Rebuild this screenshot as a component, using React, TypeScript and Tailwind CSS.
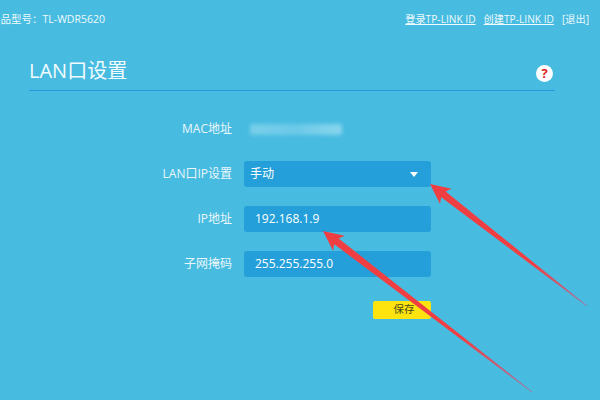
const font = "[font-family:'Open_Sans','Noto_Sans_CJK_SC',sans-serif]";

function Field({ label, children }: { label: string; children: React.ReactNode }) {
  return (
    <div className="flex items-center h-[26px]">
      <div className="w-[203px] text-right text-[12px] text-[#eaf7fc] whitespace-nowrap">{label}</div>
      <div className="ml-[12px]">{children}</div>
    </div>
  );
}

function Box({ children }: { children: React.ReactNode }) {
  return (
    <div className="w-[187px] h-[26px] rounded-[3px] bg-[#249fd9] flex items-center justify-between text-white text-[12px] pl-[11px] pr-[13px]">
      {children}
    </div>
  );
}

function Arrow({ id, tip, tail }: { id: string; tip: [number, number]; tail: [number, number] }) {
  const [x, y] = tip;
  const [tx, ty] = tail;
  const len = Math.hypot(tx - x, ty - y);
  const ux = (tx - x) / len;
  const uy = (ty - y) / len;
  const nx = -uy;
  const ny = ux;
  const p = (d: number, w: number) => `${x + ux * d + nx * w},${y + uy * d + ny * w}`;
  const pts = [p(0, 0), p(20, 9.5), p(17, 3.6), p(len, 0.4), p(len, -0.4), p(17, -3.6), p(20, -9.5)].join(" ");
  return (
    <>
      <defs>
        <linearGradient id={id} gradientUnits="userSpaceOnUse" x1={x} y1={y} x2={tx} y2={ty}>
          <stop offset="0.65" stopColor="#f03f42" />
          <stop offset="1" stopColor="#a8729c" />
        </linearGradient>
      </defs>
      <polygon points={pts} fill={`url(#${id})`} />
    </>
  );
}

export default function App() {
  return (
    <div className={`relative w-[600px] h-[400px] overflow-hidden bg-[#47bbe0] ${font}`}>
      <div className="flex items-center justify-between h-[14px] mt-[13px] pr-[11px] text-[10.2px] text-[#eefafd] whitespace-nowrap">
        <span className="-ml-[10px] text-[10.5px]">产品型号：TL-WDR5620</span>
        <div className="flex gap-[8px]">
          <span className="underline">登录TP-LINK ID</span>
          <span className="underline">创建TP-LINK ID</span>
          <span>[退出]</span>
        </div>
      </div>

      <div className="ml-[29px] w-[526px] mt-[29px] h-[35px] border-b border-[#2a94dc] flex items-start justify-between pr-[2px]">
        <h1 className="mt-[1px] text-[20px] leading-[28px] text-[#f2fbfe] font-normal">LAN口设置</h1>
        <div className="mt-[9px] w-[17px] h-[17px] rounded-full bg-white flex items-center justify-center text-[#e0201b] text-[13px] font-bold leading-none">
          ?
        </div>
      </div>

      <div className="ml-[29px] mt-[25px] flex flex-col">
        <Field label="MAC地址">
          <div className="ml-[6px] w-[92px] h-[11px] rounded-[2px] bg-gradient-to-r from-[#79cfea] via-[#6cc9e8] to-[#8ad6ee] blur-[2px]" />
        </Field>
        <div className="mt-[19px] flex flex-col gap-[19px]">
          <Field label="LAN口IP设置">
            <Box>
              <span className="-ml-[5px]">手动</span>
              <span className="w-0 h-0 border-l-[4px] border-r-[4px] border-t-[5px] border-l-transparent border-r-transparent border-t-white" />
            </Box>
          </Field>
          <Field label="IP地址">
            <Box>
              <span className="text-[12px]">192.168.1.9</span>
            </Box>
          </Field>
          <Field label="子网掩码">
            <Box>
              <span className="text-[12px]">255.255.255.0</span>
            </Box>
          </Field>
        </div>
        <div className="mt-[24px] ml-[344px] w-[58px] h-[18px] rounded-[2px] bg-[#fde40e] flex items-center justify-center text-[10.5px] text-[#4a4a1a] pl-[4px]">
          保存
        </div>
      </div>

      <svg className="absolute inset-0" width="600" height="400" viewBox="0 0 600 400">
        <Arrow id="arrow-a" tip={[430, 184]} tail={[587, 306]} />
        <Arrow id="arrow-b" tip={[323, 231]} tail={[532, 392]} />
      </svg>
    </div>
  );
}
